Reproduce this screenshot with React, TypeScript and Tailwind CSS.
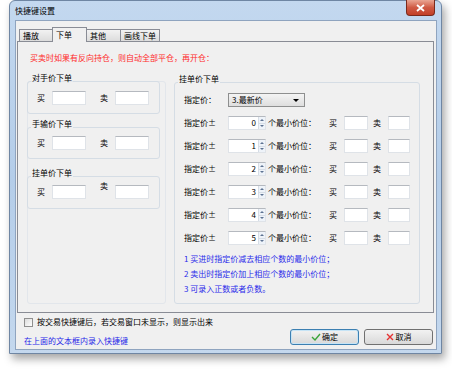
const Box = ({ className }: { className: string }) => (
  <div className={`bg-white border border-[#dfe3e8] border-t-[#b5b9bf] ${className}`} />
);

const Spinner = ({ value }: { value: number }) => (
  <div className="flex h-[14px] w-[38px] items-stretch border border-[#dfe3e8] border-t-[#b5b9bf] bg-white">
    <div className="flex-1 pr-[2px] text-right leading-[12px]">{value}</div>
    <div className="flex w-[7px] flex-col border-l border-[#d6dde6] bg-[#eef3f9]">
      <div className="flex flex-1 items-center justify-center border-b border-[#d6dde6]">
        <div className="h-0 w-0 border-x-[2px] border-b-[2px] border-x-transparent border-b-[#5d7392]" />
      </div>
      <div className="flex flex-1 items-center justify-center">
        <div className="h-0 w-0 border-x-[2px] border-t-[2px] border-x-transparent border-t-[#5d7392]" />
      </div>
    </div>
  </div>
);

const Group = ({
  title,
  className,
  children,
}: {
  title: string;
  className: string;
  children: React.ReactNode;
}) => (
  <fieldset className={`rounded-[3px] border border-[#d5dde5] ${className}`}>
    <legend className="ml-[3px] px-[1px] pb-[6px] leading-[10px]">{title}</legend>
    {children}
  </fieldset>
);

const BuySell = ({ raiseSell }: { raiseSell?: boolean }) => (
  <div className="flex items-start pl-[9px]">
    <span className="mt-[2px] leading-[10px]">买</span>
    <Box className="ml-[7px] h-[14px] w-[34px]" />
    <span className={`ml-[14px] leading-[10px] ${raiseSell ? "-mt-[4px]" : "mt-[2px]"}`}>卖</span>
    <Box className="ml-[7px] h-[14px] w-[34px]" />
  </div>
);

const Tab = ({ label, active, className }: { label: string; active?: boolean; className: string }) =>
  active ? (
    <div className={`relative z-10 -mb-px h-[15px] border border-b-0 border-[#898c95] bg-[#f0f0f0] pl-[3px] leading-[13px] ${className}`}>
      {label}
    </div>
  ) : (
    <div className={`h-[12px] border border-b-0 border-[#898c95] bg-gradient-to-b from-[#f2f2f2] to-[#dcdcdc] pl-[3px] leading-[11px] ${className}`}>
      {label}
    </div>
  );

export default function App() {
  const rows = [0, 1, 2, 3, 4, 5];
  return (
    <div className="h-[374px] w-[452px] bg-white pl-[9px] font-['Noto_Sans_CJK_SC',sans-serif] text-[8px] text-black">
      <div className="flex h-[354px] w-[433px] flex-col rounded-t-[6px] border border-[#6f86a3] bg-gradient-to-b from-[#c3d8ef] via-[#b4cde9] to-[#c4d8ee] pb-[3px] pl-[5px] pr-[4px] shadow-[3px_5px_8px_rgba(0,0,0,0.35)]">
        <div className="flex h-[19px] items-start justify-between">
          <span className="mt-[5px] leading-[10px]">快捷键设置</span>
          <div className="-mt-px mr-[2px] flex h-[16px] w-[29px] items-center justify-center rounded-b-[4px] border border-t-0 border-[#7a2a1c] bg-gradient-to-b from-[#e9a593] via-[#cf5a44] to-[#c23f27]">
            <svg width="9" height="8" viewBox="0 0 9 8">
              <path d="M1 1 L8 7 M8 1 L1 7" stroke="#ffffff" strokeWidth="1.8" />
            </svg>
          </div>
        </div>
        <div className="flex flex-1 flex-col border border-[#8fa4bf] bg-[#f0f0f0]">
          <div className="mt-[6px] flex items-end pl-[2px]">
            <Tab label="播放" className="ml-[1px] w-[34px]" />
            <Tab label="下单" active className="-ml-px w-[35px]" />
            <Tab label="其他" className="-ml-px w-[35px]" />
            <Tab label="画线下单" className="-ml-px w-[40px]" />
          </div>
          <div className="ml-[1px] h-[272px] w-[417px] border border-[#898c95] bg-[#f0f0f0]">
            <div className="mt-[11px] pl-[12px] leading-[10px] text-[#ff2a2a]">
              买卖时如果有反向持仓，则自动全部平仓，再开仓：
            </div>
            <div className="mt-[10px] flex pl-[9px]">
              <div className="mt-[8px] h-[223px] w-[139px] rounded-[3px] border border-[#e2e6eb]">
                <div className="-ml-px -mt-[9px] flex w-[133px] flex-col">
                  <Group title="对手价下单" className="h-[41px]">
                    <div className="mt-[2px]">
                      <BuySell />
                    </div>
                  </Group>
                  <Group title="手输价下单" className="mt-[5px] h-[40px]">
                    <div className="mt-[1px]">
                      <BuySell />
                    </div>
                  </Group>
                  <Group title="挂单价下单" className="mt-[9px] h-[41px]">
                    <div className="mt-[1px]">
                      <BuySell raiseSell />
                    </div>
                  </Group>
                </div>
              </div>
              <Group title="挂单价下单" className="ml-[8px] mt-px h-[230px] w-[246px]">
                <div className="flex flex-col pl-[9px]">
                  <div className="mt-[3px] flex h-[14px] items-center">
                    <span className="w-[44px] leading-[10px]">指定价：</span>
                    <div className="flex h-[14px] w-[77px] items-center justify-between border border-[#8e8f8f] bg-gradient-to-b from-[#f4f4f4] to-[#dedede] pl-[3px] pr-[5px]">
                      <span className="leading-[10px]">3.最新价</span>
                      <div className="h-0 w-0 border-x-[3px] border-t-[3px] border-x-transparent border-t-black" />
                    </div>
                  </div>
                  {rows.map((r) => (
                    <div key={r} className="mt-[9px] flex h-[14px] items-center">
                      <span className="w-[44px] leading-[10px]">指定价±</span>
                      <Spinner value={r} />
                      <span className="ml-[2px] w-[61px] leading-[10px]">个最小价位：</span>
                      <span className="w-[15px] leading-[10px]">买</span>
                      <Box className="h-[14px] w-[24px]" />
                      <span className="ml-[5px] w-[15px] leading-[10px]">卖</span>
                      <Box className="h-[14px] w-[22px]" />
                    </div>
                  ))}
                  <div className="mt-[6px] flex flex-col leading-[15px] text-[#2b2bea]">
                    <span>1 买进时指定价减去相应个数的最小价位；</span>
                    <span>2 卖出时指定价加上相应个数的最小价位；</span>
                    <span>3 可录入正数或者负数。</span>
                  </div>
                </div>
              </Group>
            </div>
          </div>
          <div className="flex justify-between pl-[8px] pr-[3px]">
            <div className="flex flex-col">
              <div className="mt-[4px] flex h-[10px] items-center">
                <div className="h-[9px] w-[9px] border border-[#8f8f8f] bg-gradient-to-br from-[#dcdcdc] to-white" />
                <span className="ml-[4px] leading-[10px]">按交易快捷键后，若交易窗口未显示，则显示出来</span>
              </div>
              <span className="mt-[9px] leading-[10px] text-[#1f1fe8]">在上面的文本框内录入快捷键</span>
            </div>
            <div className="mt-[16px] flex gap-[5px]">
              <button className="flex h-[16px] w-[69px] items-center justify-center gap-[1px] rounded-[3px] border border-[#3c7fb1] bg-gradient-to-b from-[#f2f2f2] to-[#d9d9d9] shadow-[inset_0_0_0_1px_#c6e4f6]">
                <svg width="10" height="8" viewBox="0 0 10 8">
                  <path d="M1 4 L4 7 L9 1" stroke="#3aa53a" strokeWidth="1.4" fill="none" />
                </svg>
                <span className="leading-[10px]">确定</span>
              </button>
              <button className="flex h-[16px] w-[69px] items-center justify-center gap-[2px] rounded-[3px] border border-[#707070] bg-gradient-to-b from-[#f2f2f2] to-[#d9d9d9]">
                <svg width="8" height="8" viewBox="0 0 8 8">
                  <path d="M1 1 L7 7 M7 1 L1 7" stroke="#e53232" strokeWidth="1.4" />
                </svg>
                <span className="leading-[10px]">取消</span>
              </button>
            </div>
          </div>
        </div>
      </div>
    </div>
  );
}
